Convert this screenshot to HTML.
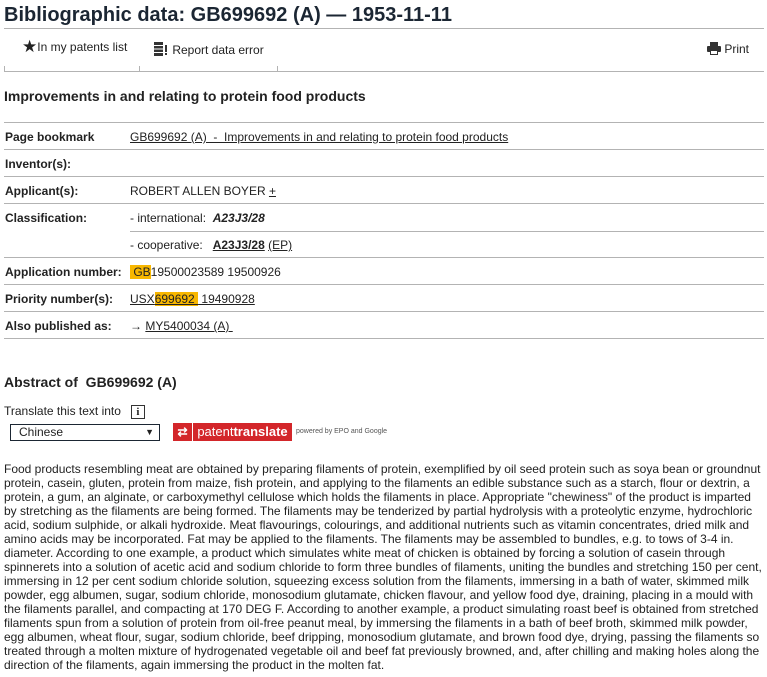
<!DOCTYPE html>
<html><head><style>
body{margin:0;width:767px;height:677px;overflow:hidden;background:#fff;font-family:"Liberation Sans",Arial,sans-serif;color:#222;font-size:12px}
.abs{position:absolute}
h1{position:absolute;left:4px;top:4px;margin:0;font-size:20px;font-weight:bold;color:#1b2633}
.hl{position:absolute;left:4px;width:760px;height:1px;background:#b3b3b3}
.row{position:absolute;left:4px;width:760px;height:27px;border-top:1px solid #b3b3b3}
.lab{position:absolute;left:1px;top:7px;font-weight:bold}
.val{position:absolute;left:126px;top:7px}
u,a{color:#222;text-decoration:underline}
.y{background:#f8b700}
p.t{position:absolute;left:4px;top:462px;width:760px;margin:0;font-size:12px;line-height:14px}
</style></head><body>
<h1>Bibliographic data: GB699692 (A) — 1953-11-11</h1>
<div class="hl" style="top:28px"></div>
<div class="abs" style="left:22px;top:40px;font-size:12px"><span style="font-size:17px;line-height:12px;vertical-align:-1px">★</span>In my patents list</div>
<div class="abs" style="left:153px;top:41px"><svg width="16" height="16" style="vertical-align:-3px"><g fill="#333"><rect x="1" y="1" width="9" height="14"/></g><g stroke="#fff"><line x1="1" y1="4.5" x2="10" y2="4.5"/><line x1="1" y1="8" x2="10" y2="8"/><line x1="1" y1="11.5" x2="10" y2="11.5"/></g><rect x="12" y="4" width="2" height="7" fill="#333"/><rect x="12" y="12" width="2" height="2" fill="#333"/></svg> Report data error</div>
<div class="abs" style="left:707px;top:42px"><svg width="14" height="13" style="vertical-align:-2px"><rect x="3" y="0" width="8" height="4" fill="#333"/><rect x="0" y="4" width="14" height="6" rx="1" fill="#333"/><rect x="3" y="8" width="8" height="5" fill="#333"/><rect x="4" y="9" width="6" height="3" fill="#fff"/></svg> Print</div>
<div class="hl" style="top:71px"></div>
<div class="abs" style="left:4px;top:66px;width:1px;height:5px;background:#b3b3b3"></div>
<div class="abs" style="left:139px;top:66px;width:1px;height:5px;background:#b3b3b3"></div>
<div class="abs" style="left:277px;top:66px;width:1px;height:5px;background:#b3b3b3"></div>
<div class="abs" style="left:4px;top:88px;font-size:14px;font-weight:bold">Improvements in and relating to protein food products</div>
<div class="row" style="top:122px"><span class="lab">Page bookmark</span><span class="val"><u>GB699692 (A) &nbsp;- &nbsp;Improvements in and relating to protein food products</u></span></div>
<div class="row" style="top:149px"><span class="lab">Inventor(s):</span></div>
<div class="row" style="top:176px"><span class="lab">Applicant(s):</span><span class="val">ROBERT ALLEN BOYER <u>+</u></span></div>
<div class="row" style="top:203px;height:54px"><span class="lab">Classification:</span><span class="val">- international: &nbsp;<b><i>A23J3/28</i></b></span>
<div class="abs" style="left:126px;top:27px;width:634px;height:1px;background:#b3b3b3"></div>
<span class="val" style="top:34px">- cooperative: &nbsp;&nbsp;<b><u>A23J3/28</u></b> <u>(EP)</u></span></div>
<div class="row" style="top:257px"><span class="lab">Application number:</span><span class="val"><span class="y">&nbsp;GB</span>19500023589 19500926</span></div>
<div class="row" style="top:284px"><span class="lab">Priority number(s):</span><span class="val"><u>USX<span class="y">699692&nbsp;</span> 19490928</u></span></div>
<div class="row" style="top:311px"><span class="lab">Also published as:</span><span class="val">→ <u>MY5400034 (A)&nbsp;</u></span></div>
<div class="hl" style="top:338px"></div>
<div class="abs" style="left:4px;top:374px;font-size:14px;font-weight:bold">Abstract of &nbsp;GB699692 (A)</div>
<div class="abs" style="left:4px;top:404px">Translate this text into &nbsp;&nbsp;<span style="display:inline-block;border:1px solid #333;width:12px;height:12px;text-align:center;font-family:'Liberation Serif',serif;font-weight:bold;font-size:11px;line-height:12px">i</span></div>
<div class="abs" style="left:10px;top:424px;width:148px;height:15px;border:1px solid #1b2633;font-size:12px;line-height:15px"><span style="margin-left:8px">Chinese</span><span style="position:absolute;right:5px;font-size:9px">▼</span></div>
<div class="abs" style="left:173px;top:423px;width:19px;height:18px;background:#d3262a;color:#fff;font-size:12px;text-align:center;line-height:18px;font-weight:bold">⇄</div>
<div class="abs" style="left:193px;top:423px;width:99px;height:18px;background:#d3262a;color:#fff;font-size:13px;line-height:18px;text-align:center">patent<b>translate</b></div>
<div class="abs" style="left:296px;top:428px;font-size:7px;color:#555">powered by EPO and Google</div>
<p class="t">Food products resembling meat are obtained by preparing filaments of protein, exemplified by oil seed protein such as soya bean or groundnut protein, casein, gluten, protein from maize, fish protein, and applying to the filaments an edible substance such as a starch, flour or dextrin, a protein, a gum, an alginate, or carboxymethyl cellulose which holds the filaments in place. Appropriate "chewiness" of the product is imparted by stretching as the filaments are being formed. The filaments may be tenderized by partial hydrolysis with a proteolytic enzyme, hydrochloric acid, sodium sulphide, or alkali hydroxide. Meat flavourings, colourings, and additional nutrients such as vitamin concentrates, dried milk and amino acids may be incorporated. Fat may be applied to the filaments. The filaments may be assembled to bundles, e.g. to tows of 3-4 in. diameter. According to one example, a product which simulates white meat of chicken is obtained by forcing a solution of casein through spinnerets into a solution of acetic acid and sodium chloride to form three bundles of filaments, uniting the bundles and stretching 150 per cent, immersing in 12 per cent sodium chloride solution, squeezing excess solution from the filaments, immersing in a bath of water, skimmed milk powder, egg albumen, sugar, sodium chloride, monosodium glutamate, chicken flavour, and yellow food dye, draining, placing in a mould with the filaments parallel, and compacting at 170 DEG F. According to another example, a product simulating roast beef is obtained from stretched filaments spun from a solution of protein from oil-free peanut meal, by immersing the filaments in a bath of beef broth, skimmed milk powder, egg albumen, wheat flour, sugar, sodium chloride, beef dripping, monosodium glutamate, and brown food dye, drying, passing the filaments so treated through a molten mixture of hydrogenated vegetable oil and beef fat previously browned, and, after chilling and making holes along the direction of the filaments, again immersing the product in the molten fat.</p>
</body></html>
